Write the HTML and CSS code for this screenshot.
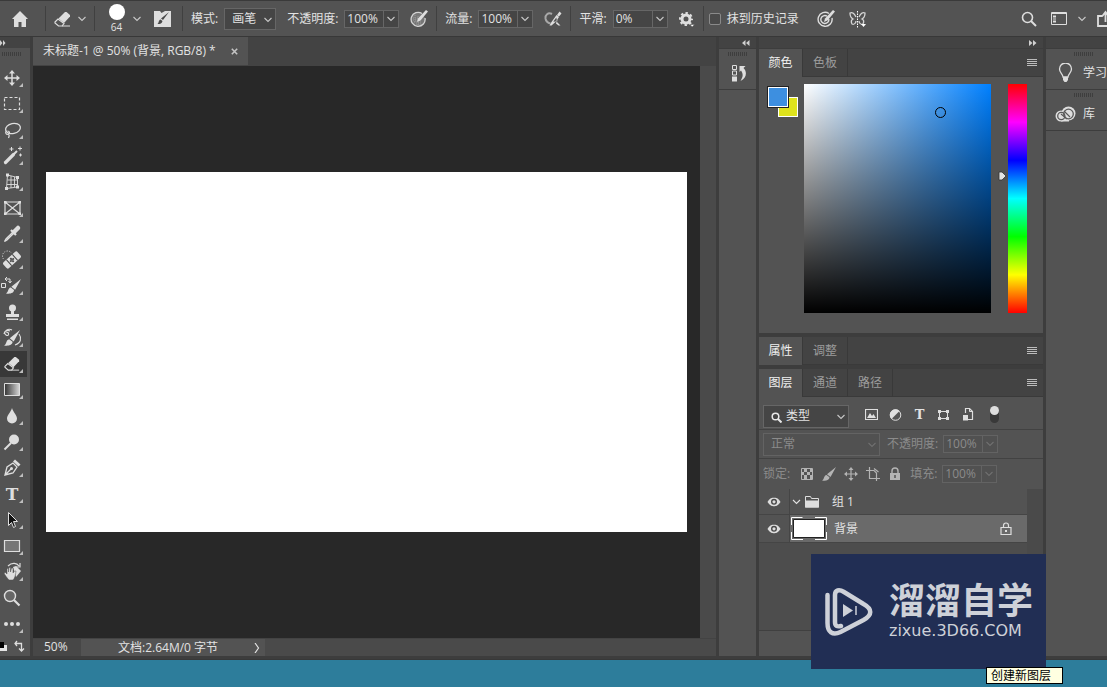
FILE: index.html
```html
<!DOCTYPE html>
<html lang="zh-CN">
<head>
<meta charset="utf-8">
<meta name="viewport" content="width=device-width, initial-scale=1">
<title>未标题-1 @ 50%</title>
<link rel="stylesheet" href="styles.css">
</head>
<body>
<svg class="defs" aria-hidden="true">
  <symbol id="chev" viewBox="0 0 8 6"><path d="M.5 1l3.500 3.500L7.500 1" fill="none" stroke="currentColor" stroke-width="1.100"/></symbol>
  <symbol id="menu" viewBox="0 0 10 8"><path d="M0 .5h10M0 2.500h10M0 4.500h10M0 6.500h10" stroke="currentColor" fill="none"/></symbol>
  <symbol id="eye" viewBox="0 0 14 10"><path d="M.5 5C3 1 5 .8 7 .8S11 1 13.500 5C11 9 9 9.200 7 9.200S3 9 .5 5z" fill="#dedede"/><circle cx="7" cy="4.800" r="3" fill="#484848"/><circle cx="7" cy="4.800" r="1.600" fill="#dedede"/></symbol>
  <symbol id="eraser" viewBox="0 0 18 18"><path d="M1 12L4 9l6 4.500-2 2.500H4.500L1 13z" fill="none" stroke="#dedede" stroke-width="1.200"/><path d="M4.500 8.500L11 2h1.500L16 5v1.500l-6 6.500z" fill="#dedede"/><path d="M8 16h8" stroke="#dedede"/></symbol>
  <symbol id="brush" viewBox="0 0 14 14"><path d="M14 0L8.500 10 5 7.300zM4.500 8l3 2.300C7.500 13 4 14.300 0 13.500 2.500 12.500 1.500 8.500 4.500 8z" fill="currentColor"/></symbol>
</svg>

<div class="app">
  <header class="options">
    <div class="group">
      <button class="icon home" aria-label="主页"><svg width="16" height="16" viewBox="0 0 16 16"><path d="M8 0l8 8h-2v8H9.500v-5h-3v5H2V8H0z" fill="#dedede"/></svg></button>
    </div>
    <div class="group eraser-group">
      <button class="icon" aria-label="橡皮擦"><svg width="18" height="18"><use href="#eraser"/></svg></button>
      <button class="icon" aria-label="预设"><svg width="8" height="6"><use href="#chev"/></svg></button>
    </div>
    <div class="group brush-group">
      <button class="icon brush-size"><span class="dot"></span><span>64</span></button>
      <button class="icon" aria-label="画笔选项"><svg width="8" height="6"><use href="#chev"/></svg></button>
      <button class="icon brush-panel" aria-label="画笔设置"><svg width="17" height="17" viewBox="0 0 17 17"><path d="M0 1h6l1.500 2L11 1h6v16H0z" fill="#dedede"/><path d="M15 2l-6 8-2-1.500zM6.500 9.500l2 1.500c-.5 2.500-2 3-5 3 1.500-1 1-4 3-4.500z" fill="#484848"/></svg></button>
    </div>
    <div class="group">
      <div class="field"><label for="mode">模式:</label><span class="drop"><select id="mode"><option>画笔</option></select><svg width="8" height="6"><use href="#chev"/></svg></span></div>
      <div class="field"><label for="opacity">不透明度:</label><span class="spin"><input id="opacity" value="100%"><button aria-label="调整不透明度"><svg width="8" height="6"><use href="#chev"/></svg></button></span></div>
      <button class="icon" aria-label="不透明度压力"><svg width="18" height="18" viewBox="0 0 18 18"><path d="M12 3.500A7 7 0 1 0 15 8" fill="#777" stroke="#d4d4d4" stroke-width="1.300"/><path d="M3 8h6M3 10h5M4 12h7M6 14h5M8 6v9M5 5v8" stroke="#999" stroke-dasharray="1 1"/><path d="M18 1.500l-7.500 9-3.500 1.500L8 8.500 16 0z" fill="#dedede"/></svg></button>
    </div>
    <div class="group">
      <div class="field"><label for="flow">流量:</label><span class="spin"><input id="flow" value="100%"><button aria-label="调整流量"><svg width="8" height="6"><use href="#chev"/></svg></button></span></div>
      <button class="icon" aria-label="喷枪"><svg width="18" height="18" viewBox="0 0 18 18"><path d="M8 4C4 2 1 5 1.500 8.500c.5 3 2.500 4.500 5 5" fill="none" stroke="#a8a8a8" stroke-width="2"/><path d="M15.500 1.500l2 2-2.500 3-2-1.500zM12.500 5l2.500 2-3.500 5-4 3.500H5.500L7.500 12zM14 7l-1 5 3.500 3.500h-2L12 13.500" fill="#dedede"/><path d="M12.300 7.500l-3 4 2 .3 1.500-2z" fill="#585858"/></svg></button>
    </div>
    <div class="group">
      <div class="field"><label for="smooth">平滑:</label><span class="spin"><input id="smooth" value="0%"><button aria-label="调整平滑"><svg width="8" height="6"><use href="#chev"/></svg></button></span></div>
      <button class="icon" aria-label="平滑选项"><svg width="16" height="16" viewBox="0 0 16 16"><circle cx="7" cy="8" r="4" fill="none" stroke="#dedede" stroke-width="3"/><circle cx="7" cy="8" r="6" fill="none" stroke="#dedede" stroke-width="2" stroke-dasharray="2.400 2.312" stroke-dashoffset="1.200"/><path d="M11 13.500h4.500L13.200 16z" fill="#fff" stroke="#535353" stroke-width=".5"/></svg></button>
    </div>
    <div class="group last">
      <label class="check"><input type="checkbox">抹到历史记录</label>
      <button class="icon target" aria-label="大小压力"><svg width="18" height="18" viewBox="0 0 18 18"><path d="M12 3.500A7 7 0 1 0 15 8M10 6.200A4 4 0 1 0 11.800 9" fill="none" stroke="#dedede" stroke-width="1.400"/><path d="M18 1.500l-7.500 9-3.500 1.500L8 8.500 16 0z" fill="#dedede"/></svg></button>
      <button class="icon" aria-label="对称"><svg width="18" height="18" viewBox="0 0 18 18"><path d="M7 7C5 3 3 2 1 3c0 3 1 5 3 6-2 1-2 3-1 5 2 1 4-1 4-3M10 7c2-4 4-5 6-4 0 3-1 5-3 6 2 1 2 3 1 5-2 1-4-1-4-3" fill="none" stroke="#d6d6d6" stroke-width="1.300"/><path d="M8.500 1v17" stroke="#fff" stroke-dasharray="1.500 1"/><path d="M12 14h5l-2.500 3z" fill="#fff"/></svg></button>
    </div>
    <div class="actions">
      <button class="icon" aria-label="搜索"><svg width="16" height="16" viewBox="0 0 16 16"><circle cx="6.500" cy="6.500" r="5" fill="none" stroke="#dedede" stroke-width="1.600"/><path d="M10 10l5 5" stroke="#dedede" stroke-width="2"/></svg></button>
      <button class="icon" aria-label="工作区"><svg width="16" height="13" viewBox="0 0 16 13"><path d="M.5.5h15v12H.5z" fill="none" stroke="#dedede"/><path d="M1 1.500h14" stroke="#dedede"/><path d="M2 3.500h3v2H2zM2 6.500h3v1H2zM2 8.500h3v2H2z" fill="#dedede"/></svg></button>
      <button class="icon" aria-label="工作区菜单"><svg width="8" height="6"><use href="#chev"/></svg></button>
      <button class="icon share" aria-label="共享"><svg width="10" height="18" viewBox="0 0 10 18"><path d="M5 6H1v10h14M8.500 12V3M5 6.500L8.500 2 12 6.500" fill="none" stroke="#dedede" stroke-width="1.800"/></svg></button>
    </div>
  </header>

  <main class="workspace">
    <aside class="tools" aria-label="工具">
      <div class="strip tools-strip"><svg width="6" height="6" viewBox="0 0 6 6"><path d="M0 0l2.500 3L0 6zM3 0l2.500 3L3 6z" fill="#d0d0d0"/></svg></div>
      <div class="grip"></div>
      <div class="tool-list">
        <button aria-label="移动"><svg viewBox="0 0 27 26"><path d="M12 7v12M6 13h12" stroke="#dedede" stroke-width="1.500"/><path d="M12 5l3 3.500H9zM12 21l3-3.500H9zM4 13l3.500-3v6zM20 13l-3.500-3v6z" fill="#dedede"/></svg></button>
        <button aria-label="矩形选框"><svg viewBox="0 0 27 26"><path d="M4.500 6.500h15v12h-15z" fill="none" stroke="#dedede" stroke-width="1.200" stroke-dasharray="3 2"/></svg></button>
        <button aria-label="套索"><svg viewBox="0 0 27 26"><ellipse cx="13" cy="11.500" rx="7.500" ry="5" transform="rotate(-12 13 11.500)" fill="none" stroke="#dedede" stroke-width="1.300"/><path d="M6.500 14c-2 2 0 4 2 3s1-3-1-3M8.500 17c1 1 1 2 0 4" fill="none" stroke="#dedede" stroke-width="1.200"/></svg></button>
        <button aria-label="魔棒"><svg viewBox="0 0 27 26"><path d="M5.500 19.500l8-8" stroke="#dedede" stroke-width="3.200" stroke-linecap="round"/><path d="M14 11l3-3" stroke="#dedede" stroke-width="2"/><path d="M11.500 4v4M9.500 6h4M20 3.500v4M18 5.500h4M20.500 10.500v3M19 12h3" stroke="#dedede"/></svg></button>
        <button aria-label="透视裁剪"><svg viewBox="0 0 27 26"><path d="M7.500 6l10 2.500v9.500l-11 1.500zM7.500 11h10M7 15.500h10.500M11 7v12M14.500 8v10" fill="none" stroke="#dedede" stroke-width=".9"/><path d="M6 4.500h3v3H6zM16 7h3v3h-3zM5 18h3v3H5zM16 16.500h3v3h-3z" fill="#dedede"/></svg></button>
        <button aria-label="图框"><svg viewBox="0 0 27 26"><path d="M5 7h15v12H5zM5 7l15 12M20 7L5 19" fill="none" stroke="#dedede" stroke-width="1.200"/><path d="M4 6h2.500v2.500H4zM18.500 6H21v2.500h-2.500zM4 17.500h2.500V20H4zM18.500 17.500H21V20h-2.500z" fill="#dedede"/></svg></button>
        <button aria-label="吸管"><svg viewBox="0 0 27 26"><path d="M13 11l-7 7-1.500 2.500L7 19l7-7" fill="none" stroke="#dedede" stroke-width="1.300"/><path d="M11 9l5 5" stroke="#dedede" stroke-width="2.200"/><path d="M14 11l4-4" stroke="#dedede" stroke-width="4.500" stroke-linecap="round"/></svg></button>
        <button aria-label="修复画笔"><svg viewBox="0 0 27 26"><g transform="rotate(-42 12 13)"><rect x="2.500" y="9" width="19" height="8" rx="2" fill="#dedede"/><path d="M8 9v8M16 9v8" stroke="#484848"/><path d="M12 10.500v5M9.500 13h5" stroke="#484848" stroke-width="1.800" stroke-dasharray="2 1"/></g><path d="M3.500 12a5 5 0 0 1 8-6" fill="none" stroke="#dedede" stroke-dasharray="1 1.500"/></svg></button>
        <button aria-label="颜色替换"><svg viewBox="0 0 27 26"><g color="#dedede"><use href="#brush" x="6" y="6" width="15" height="15"/></g><path d="M1.500 10.500h4v4h-4zM5 6h5v3M7 4L5 6l2 2M8.500 8l1.500 2 1.500-2" fill="none" stroke="#dedede"/></svg></button>
        <button aria-label="仿制图章"><svg viewBox="0 0 27 26"><circle cx="12.500" cy="9" r="3.500" fill="#dedede"/><path d="M11 11h3v4h5v3H6v-3h5zM7 19.500h11V21H7z" fill="#dedede"/></svg></button>
        <button aria-label="历史记录画笔"><svg viewBox="0 0 27 26"><g color="#dedede"><use href="#brush" x="4" y="5" width="16" height="16"/></g><path d="M10 6C6 4 3 8 6 10s4-3 0-3M19 9c3 4 2 9-4 11M12 5c-4-2-8 1-8 4" fill="none" stroke="#dedede" stroke-width="1.100"/></svg></button>
        <button class="active" aria-label="橡皮擦"><svg viewBox="0 0 27 26"><use href="#eraser" x="4" y="4" width="17" height="17"/></svg></button>
        <button aria-label="渐变"><svg viewBox="0 0 27 26"><defs><linearGradient id="g"><stop stop-color="#333"/><stop offset="1" stop-color="#d6d6d6"/></linearGradient></defs><path d="M4.500 6.500h15v12h-15z" fill="url(#g)" stroke="#dedede"/></svg></button>
        <button aria-label="模糊"><svg viewBox="0 0 27 26"><path d="M12 5c1 4 5 7 5 10.500a5 5 0 0 1-10 0C7 12 11 9 12 5z" fill="#dedede"/></svg></button>
        <button aria-label="减淡"><svg viewBox="0 0 27 26"><circle cx="14" cy="10.500" r="5" fill="#dedede"/><path d="M11 14l-6.500 6.500" stroke="#dedede" stroke-width="2"/></svg></button>
        <button aria-label="钢笔"><svg viewBox="0 0 27 26"><path d="M5 20L7 12l6-4 4 4-4 6zM5 20l6-6" fill="none" stroke="#dedede" stroke-width="1.300"/><path d="M13 6.500l2-2 5.500 5-2 2z" fill="#dedede"/><circle cx="11.500" cy="13.500" r="1.500" fill="#dedede"/></svg></button>
        <button aria-label="文字"><span class="type">T</span></button>
        <button aria-label="路径选择"><svg viewBox="0 0 27 26"><path d="M8.500 5.500v13l3-3 2 5 2-1-2-5h4z" fill="#111" stroke="#dedede"/></svg></button>
        <button aria-label="矩形"><svg viewBox="0 0 27 26"><path d="M4.500 7.500h15v11h-15z" fill="#777" stroke="#dedede" stroke-width="1.200"/></svg></button>
        <button aria-label="旋转视图"><svg viewBox="0 0 27 26"><path d="M8 7c4-4 9-3 11 0M20 4v4h-4" fill="none" stroke="#dedede" stroke-width="1.200"/><path d="M13 8l3-1 5 5-5 6z" fill="#dedede"/><path d="M9 21c-2-2-4-5-5-7l1.500-.5L7 15V9.500h1.500V13l.5-4.500h1.500V13l1-4H13v5l1.500-2H16c-.5 4-1 7-3 9z" fill="#dedede" stroke="#535353" stroke-width=".5"/></svg></button>
        <button class="single" aria-label="缩放"><svg viewBox="0 0 27 26"><circle cx="10" cy="11" r="5.500" fill="#666" stroke="#dedede" stroke-width="1.400"/><path d="M14 15l5.500 5.500" stroke="#dedede" stroke-width="2.200"/></svg></button>
        <button aria-label="编辑工具栏"><svg viewBox="0 0 27 26"><circle cx="6" cy="13" r="2" fill="#dedede"/><circle cx="12" cy="13" r="2" fill="#dedede"/><circle cx="18" cy="13" r="2" fill="#dedede"/></svg></button>
      </div>
      <div class="tool-colors"><svg width="27" height="18" viewBox="0 0 27 18"><path d="M1 8h6v6H0v-3z" fill="#e4e4e4"/><path d="M0 5h4v6H0z" fill="#000"/><path d="M17 4l-2 2.500L17 9M15 6.500h6.500V13M19 11.500l2.500 2.500 2.500-2.500" fill="none" stroke="#dedede" stroke-width="1.300"/></svg></div>
    </aside>

    <section class="document">
      <div class="doc-tabs"><div class="doc-tab"><span>未标题-1 @ 50% (背景, RGB/8) *</span><button aria-label="关闭"><svg width="7" height="7" viewBox="0 0 7 7"><path d="M.8.8l5.400 5.400M6.200.8L.8 6.200" stroke="#c4c4c4" stroke-width="1.600"/></svg></button></div></div>
      <div class="stage"><div class="paper"></div></div>
      <div class="vscroll"></div>
      <footer class="status"><span class="zoom">50%</span><span class="info">文档:2.64M/0 字节<svg width="6" height="10" viewBox="0 0 6 10"><path d="M1 0l3.500 5L1 10" fill="none" stroke="currentColor" stroke-width="1.200"/></svg></span></footer>
    </section>

    <aside class="collapsed">
      <div class="strip end"><svg width="8" height="6" viewBox="0 0 8 6"><path d="M3.500 0v6L0 3zM7.500 0v6L4 3z" fill="#d0d0d0"/></svg></div>
      <div class="dock-cell"><div class="grip"></div><button class="icon" aria-label="历史记录"><svg width="16" height="18" viewBox="0 0 16 18"><path d="M1.500 1.500h4v4h-4zM1.500 7h4v4h-4z" fill="none" stroke="#dedede"/><path d="M1 12.500h5v5H1z" fill="#dedede"/><path d="M8.500 2h6l-2 2c4 4 3 10-3 13 2.500-4 3-7 .5-10.500L8.500 8z" fill="#dedede"/></svg></button></div>
      <div class="fill"></div>
    </aside>

    <aside class="panels">
      <div class="strip end"><svg width="8" height="6" viewBox="0 0 8 6"><path d="M0 0l3.500 3L0 6zM4 0l3.500 3L4 6z" fill="#d0d0d0"/></svg></div>
      <section class="panel">
        <div class="tabs"><button class="on">颜色</button><button>色板</button><svg class="menu" width="10" height="8"><use href="#menu"/></svg></div>
        <div class="color-body">
          <div class="swatches"><i class="back"></i><i class="front"></i></div>
          <div class="field-box"><span class="picker"></span></div>
          <div class="hue"><svg width="9" height="10" viewBox="0 0 9 10"><path d="M1 1h3l4 4-4 4H1z" fill="#e4e4e4" stroke="#333" stroke-width=".8"/></svg></div>
        </div>
      </section>
      <section class="panel">
        <div class="tabs"><button class="on">属性</button><button>调整</button><svg class="menu" width="10" height="8"><use href="#menu"/></svg></div>
      </section>
      <section class="panel layers">
        <div class="tabs"><button class="on">图层</button><button>通道</button><button>路径</button><svg class="menu" width="10" height="8"><use href="#menu"/></svg></div>
        <div class="row filter">
          <span class="drop kind"><svg class="lens" width="11" height="11" viewBox="0 0 11 11"><circle cx="4.500" cy="4.500" r="3.300" fill="none" stroke="#e8e8e8" stroke-width="1.500"/><path d="M7 7l3.500 3.500" stroke="#e8e8e8" stroke-width="2"/></svg><select aria-label="筛选"><option>类型</option></select><svg width="8" height="6"><use href="#chev"/></svg></span>
          <div class="filters">
            <button class="icon" aria-label="像素"><svg width="13" height="12" viewBox="0 0 13 12"><path d="M.5.500h12v10H.5z" fill="none" stroke="#dedede" stroke-width="1.200"/><path d="M2 9l3-5 2 3 1.500-2L11 9z" fill="#dedede"/></svg></button>
            <button class="icon" aria-label="调整图层"><svg width="13" height="12" viewBox="0 0 13 12"><circle cx="6.500" cy="6" r="5.300" fill="#535353" stroke="#dedede"/><path d="M10.500 2A5.500 5.500 0 0 0 2.500 10z" fill="#dedede"/></svg></button>
            <button class="icon type-small" aria-label="文字图层">T</button>
            <button class="icon" aria-label="形状"><svg width="13" height="12" viewBox="0 0 13 12"><path d="M2.500 2.500h8v7h-8z" fill="none" stroke="#dedede"/><path d="M1 1h3v3H1zM9 1h3v3H9zM1 8h3v3H1zM9 8h3v3H9z" fill="#dedede"/></svg></button>
            <button class="icon" aria-label="智能对象"><svg width="13" height="13" viewBox="0 0 13 13"><path d="M4.500 5V.5h4l3 3v8H7" fill="none" stroke="#dedede" stroke-width="1.200"/><path d="M8.500.500v3h3" fill="none" stroke="#dedede"/><path d="M2 7h5v5.500H2z" fill="#dedede"/></svg></button>
            <button class="icon toggle" aria-label="筛选开关"><i></i></button>
          </div>
        </div>
        <div class="row off">
          <span class="drop blend"><select aria-label="混合模式" disabled><option>正常</option></select><svg width="8" height="6"><use href="#chev"/></svg></span>
          <div class="field"><label for="lop">不透明度:</label><span class="spin"><input id="lop" value="100%" disabled><button disabled aria-label="调整图层不透明度"><svg width="8" height="6"><use href="#chev"/></svg></button></span></div>
        </div>
        <div class="row off locks">
          <span>锁定:</span>
          <div class="lock-icons">
            <svg width="14" height="14" viewBox="0 0 14 14"><path d="M1.500 1.500h11v11h-11z" fill="none" stroke="#b4b4b4"/><path d="M4 2h3v3H4zM10 2h3v3h-3zM1 5h3v3H1zM7 5h3v3H7zM4 8h3v4H4zM10 8h3v4h-3z" fill="#b4b4b4"/></svg>
            <svg width="14" height="14" class="lit"><use href="#brush"/></svg>
            <svg width="14" height="14" viewBox="0 0 14 14"><path d="M7 2v10M2 7h10" stroke="#b4b4b4" stroke-width="1.200"/><path d="M7 0l2.500 3h-5zM7 14l2.500-3h-5zM0 7l3-2.500v5zM14 7l-3-2.500v5z" fill="#b4b4b4"/></svg>
            <svg width="14" height="14" viewBox="0 0 14 14"><path d="M3.500 0v11.500H14M0 3.500h8l2.500 2.500v8M8 1.500L12.500 5" fill="none" stroke="#b4b4b4" stroke-width="1.200"/></svg>
            <svg width="14" height="14" viewBox="0 0 14 14"><path d="M2 6h10v7H2z" fill="#b4b4b4"/><path d="M4 6V4a3 3 0 0 1 6 0v2" fill="none" stroke="#b4b4b4" stroke-width="1.400"/><path d="M7 8v3" stroke="#535353" stroke-width="1.500"/></svg>
          </div>
          <div class="field"><label for="fillop">填充:</label><span class="spin"><input id="fillop" value="100%" disabled><button disabled aria-label="调整填充"><svg width="8" height="6"><use href="#chev"/></svg></button></span></div>
        </div>
        <div class="list-wrap">
          <ul class="list">
            <li><button class="icon vis" aria-label="显示"><svg width="14" height="10"><use href="#eye"/></svg></button><div class="layer group-layer"><svg width="9" height="6"><use href="#chev"/></svg><svg class="folder" width="14" height="12" viewBox="0 0 14 12"><path d="M.5 11V.500h5l1 2h7V11z" fill="none" stroke="#dedede"/><path d="M0 4.500h14v7H0z" fill="#dedede"/></svg><span>组 1</span></div></li>
            <li class="selected"><button class="icon vis" aria-label="显示"><svg width="14" height="10"><use href="#eye"/></svg></button><div class="layer"><svg class="thumb" width="36" height="23" viewBox="0 0 36 23"><path d="M.5 8V.5h11M24 .500h11.500V8M35.500 15v7.500H24M12 22.500H.5V15" fill="none" stroke="#fff"/><path d="M2.500 2.500h31v18h-31z" fill="#fff" stroke="#222"/></svg><span>背景</span><svg class="lock" width="12" height="13" viewBox="0 0 12 13"><path d="M1 5.500h10v7H1z" fill="none" stroke="#dedede" stroke-width="1.200"/><path d="M3.500 5V3.500a2.500 2.500 0 0 1 5 0V5" fill="none" stroke="#dedede" stroke-width="1.200"/><path d="M5 8h2v2H5z" fill="#dedede"/></svg></div></li>
          </ul>
          <div class="list-scroll"></div>
        </div>
        <div class="layer-foot"></div>
      </section>
    </aside>

    <aside class="dock">
      <div class="strip"></div>
      <button class="dock-cell"><span class="grip"></span><span class="dock-label"><svg width="21" height="20" viewBox="0 0 21 20"><path d="M8 14c0-3-3.500-4-3.500-8a6 6 0 0 1 12 0c0 4-3.500 5-3.500 8z" fill="none" stroke="#dedede" stroke-width="1.300"/><path d="M8 14h5v3l-1.500 2h-2L8 17z" fill="#dedede"/></svg>学习</span></button>
      <button class="dock-cell"><span class="grip"></span><span class="dock-label"><svg width="21" height="16" viewBox="0 0 21 16"><circle cx="6" cy="10" r="5.500" fill="#dedede"/><circle cx="13.500" cy="7.500" r="7" fill="#dedede"/><path d="M6 10h8v5.500H6z" fill="#dedede"/><circle cx="6.300" cy="10" r="3.600" fill="none" stroke="#5a5a5a" stroke-width="1.300"/><circle cx="13.500" cy="8" r="4.800" fill="none" stroke="#5a5a5a" stroke-width="1.300"/><path d="M6 8l6 5M9 5l6 6" stroke="#5a5a5a" stroke-width="1.100"/></svg>库</span></button>
      <div class="fill"></div>
    </aside>
  </main>

  <div class="watermark">
    <svg width="48" height="50" viewBox="0 0 48 50"><path d="M2.500 8v28c0 9 5 13 13 9l23-12c9-5 9-11 0-16L19 5c-5-3-9-2-9 3v27c0 4 2 5 6 4" fill="none" stroke="#ced1d8" stroke-width="4.500" stroke-linecap="round"/><path d="M18 17l10 6.500L18 30z" fill="#ced1d8"/><path d="M31 19v9" stroke="#ced1d8" stroke-width="1.500"/></svg>
    <div class="brand"><strong>溜溜自学</strong><span>zixue.3D66.COM</span></div>
  </div>
  <div class="tooltip" role="tooltip">创建新图层</div>
</div>
</body>
</html>
```
FILE: styles.css
```css
* { box-sizing: border-box; }
body {
  margin: 0;
  background: #2d7d9b;
  color: #e2e2e2;
  font: 12px/16px "Open Sans", "Noto Sans CJK SC", sans-serif;
  overflow: hidden;
}
button, input, select { font: inherit; color: inherit; margin: 0; padding: 0; border: 0; background: none; border-radius: 0; }
svg { display: block; flex: none; }
.defs { position: absolute; width: 0; height: 0; }
.app { position: relative; height: 100vh; display: flex; flex-direction: column; padding-bottom: 27px; }

/* options bar */
.options {
  display: flex; align-items: center; height: 37px; flex: none;
  background: #535353; border-top: 1px solid #3a3a3a; border-bottom: 1px solid #383838;
}
.options svg { color: #c8c8c8; }
.group { display: flex; align-items: center; gap: 11px; height: 25px; padding: 0 8px; border-right: 1px solid #404040; white-space: nowrap; flex: none; }
.icon { display: flex; align-items: center; justify-content: center; flex: none; }
.home { padding: 0 9px 0 4px; }
.eraser-group { gap: 6px; }
.brush-group { gap: 8px; padding: 0 11px 0 13px; }
.brush-size { flex-direction: column; width: 17px; height: 32px; font-size: 10px; line-height: 12px; gap: 1px; }
.dot { width: 16px; height: 16px; border-radius: 50%; background: #fff; flex: none; }
.brush-panel { margin-left: 5px; }
.last { border: 0; padding-left: 5px; gap: 14px; }
.target { margin-left: 4px; }
.field { display: flex; align-items: center; gap: 6px; white-space: nowrap; }
.drop { position: relative; display: flex; width: 52px; height: 22px; background: #454545; border: 1px solid #666; }
.drop select { appearance: none; width: 100%; padding-left: 7px; outline: 0; opacity: 1; }
.drop svg { position: absolute; right: 3px; top: 8px; pointer-events: none; color: #c8c8c8; }
.spin { display: flex; width: 55px; height: 18px; border: 1px solid #666; background: #454545; }
.spin input { width: 39px; padding-left: 2px; border-right: 1px solid #666; outline: 0; }
.spin button { flex: 1; display: flex; align-items: center; justify-content: center; }
.check { display: flex; align-items: center; gap: 6px; }
.check input { appearance: none; width: 12px; height: 12px; border: 1px solid #8a8a8a; border-radius: 2px; background: #4a4a4a; }
.actions { display: flex; align-items: center; gap: 11px; margin-left: auto; }
.actions .icon:first-child { margin-right: 3px; }

/* workspace */
.workspace {
  flex: 1; min-height: 0; display: grid; column-gap: 3px;
  grid-template-columns: 30px minmax(0, 1fr) 37px 284px 61px;
  background: #3d3d3d; border-bottom: 1px solid #383838; padding-bottom: 3px;
}
.workspace > * { min-height: 0; min-width: 0; display: flex; flex-direction: column; }
.strip { height: 11px; flex: none; background: #434343; margin-bottom: 1px; display: flex; align-items: center; }
.end { justify-content: flex-end; padding-right: 6px; }
.grip { display: block; width: 20px; height: 4px; background: repeating-linear-gradient(90deg, #3e3e3e 0 1px, #535353 1px 2px); flex: none; }
.fill { flex: 1; background: #535353; }
.tools { background: #535353; }
.tools .grip { margin: 3px 0 9px 2px; }
.tool-list { display: flex; flex-direction: column; }
.tool-list button { position: relative; width: 27px; height: 26px; }
.tool-list svg { width: 27px; height: 26px; }
.tool-list button::after { content: ""; position: absolute; right: 4px; bottom: 4px; border: 2px solid; border-color: transparent #bdbdbd #bdbdbd transparent; }
.tool-list .single::after { display: none; }
.tool-list .active { background: #383838; }
.type { display: block; padding-right: 3px; font: bold 17px/26px "DejaVu Serif", serif; text-align: center; color: #dedede; }
.tool-colors { flex: 1; }

.document { background: #434343; }
.workspace > .document { display: grid; grid-template: 28px minmax(0, 1fr) 17px / minmax(0, 1fr) 16px; row-gap: 1px; }
.doc-tabs { grid-column: 1 / 3; display: flex; }
.doc-tab { display: flex; align-items: center; gap: 9px; padding: 0 10px; background: #535353; white-space: nowrap; }
.doc-tab span { min-width: 179px; }
.stage { background: #282828; display: flex; align-items: center; justify-content: center; }
.paper { width: 96%; aspect-ratio: 16 / 9; background: #fff; }
.vscroll { background: #4a4a4a; }
.status { grid-column: 1 / 3; display: flex; background: #4a4a4a; }
.zoom { width: 48px; padding-left: 11px; background: #474747; }
.info { display: flex; align-items: center; justify-content: space-between; width: 184px; padding: 0 5px 0 37px; background: #535353; }

.dock-cell { display: flex; flex-direction: column; align-items: center; height: 40px; padding: 3px 0 0; background: #535353; margin-bottom: 1px; flex: none; }
.dock-cell .icon { height: 34px; padding-left: 2px; }
.dock .dock-cell { align-items: flex-start; }
.dock .grip { margin-left: 28px; }
.dock-label { display: flex; align-items: center; gap: 7px; height: 34px; padding-left: 9px; white-space: nowrap; }

/* panels */
.panel { background: #535353; margin-bottom: 4px; flex: none; }
.tabs { display: flex; align-items: center; height: 28px; background: #434343; border-bottom: 1px solid #3a3a3a; }
.tabs button { width: 45px; height: 28px; color: #9c9c9c; border-right: 1px solid #393939; }
.tabs .on { width: 44px; background: #535353; color: #f0f0f0; }
.menu { margin: 0 6px 0 auto; color: #bcbcbc; }
.color-body { display: flex; padding: 7px 16px 20px 9px; }
.swatches { position: relative; width: 36px; height: 36px; }
.swatches i { position: absolute; width: 20px; height: 20px; border: 1px solid #fff; }
.front { left: 0; top: 3px; background: #3d8fe0; outline: 1px solid #222; }
.swatches .back { left: 10px; top: 13px; background: #dfe31c; }
.field-box { position: relative; flex: 1; height: 229px; background: linear-gradient(to top, #000, transparent), linear-gradient(to right, #fff, #0080ff); }
.picker { position: absolute; left: 70%; top: 10%; width: 11px; height: 11px; border: 1px solid #000; border-radius: 50%; }
.hue { position: relative; width: 19px; margin-left: 17px; background: linear-gradient(red, magenta, blue, cyan, lime, yellow, red); }
.hue svg { position: absolute; left: -10px; top: 38%; }
.layers { flex: 1; min-height: 0; margin: 0; display: flex; flex-direction: column; }
.layers .tabs { flex: none; }
.row { display: flex; align-items: center; height: 29px; padding: 0 0 0 4px; gap: 7px; border-bottom: 1px solid #424242; flex: none; }
.row .field { gap: 5px; }
.filter { height: 33px; padding-top: 6px; }
.kind { width: 86px; height: 23px; }
.kind select { padding-left: 22px; }
.drop .lens { left: 7px; top: 6px; }
.filters { display: flex; gap: 11px; padding: 0 0 3px 9px; align-items: center; }
.filters .icon { width: 13px; height: 16px; }
.filters .type-small { font: bold 13px/16px "DejaVu Serif", serif; }
.filters .toggle { align-items: flex-start; width: 9px; height: 17px; margin-left: 5px; border-radius: 5px; background: #393939; }
.toggle i { width: 9px; height: 9px; border-radius: 50%; background: #dedede; }
.off { color: #8b8b8b; }
.off .drop, .off .spin { background: #515151; border-color: #636363; }
.off .spin input { border-color: #636363; }
.off svg { color: #707070; }
.blend { width: 117px; height: 23px; }
.locks { height: 30px; border: 0; }
.lock-icons { display: flex; gap: 8px; margin: 0 1px 0 3px; }
.off .lit { color: #b4b4b4; }
.list-wrap { flex: 1; display: flex; min-height: 0; background: #4d4d4d; }
.list { flex: 1; margin: 0; padding: 0; list-style: none; }
.list li { display: flex; height: 26px; background: #535353; border-bottom: 1px solid #454545; }
.list .selected { height: 28px; }
.vis { width: 31px; border-right: 1px solid #454545; }
.layer { flex: 1; display: flex; align-items: center; gap: 7px; padding-left: 1px; }
.group-layer { gap: 4px; padding-left: 2px; }
.folder { margin-right: 9px; }
.selected .layer { background: #6a6a6a; }
.lock { margin: 0 15px 0 auto; }
.list-scroll { width: 16px; background: #4a4a4a; }
.layer-foot { height: 26px; border-top: 1px solid #404040; flex: none; }

/* overlays */
.watermark { position: absolute; right: 61px; bottom: 18px; width: 235px; height: 115px; padding: 0 12px 0 14px; display: flex; align-items: center; gap: 16px; background: #212e54; color: #ced1d8; }
.brand { display: flex; flex-direction: column; white-space: nowrap; }
.brand strong { font: 700 36px/38px "Liberation Sans", "Noto Sans CJK SC", sans-serif; }
.brand span { font: 16px/20px "DejaVu Sans", sans-serif; }
.tooltip { position: absolute; right: 44px; bottom: 3px; width: 77px; height: 17px; padding-left: 4px; line-height: 15px; background: #ffffe1; border: 1px solid #000; color: #000; white-space: nowrap; }
```
